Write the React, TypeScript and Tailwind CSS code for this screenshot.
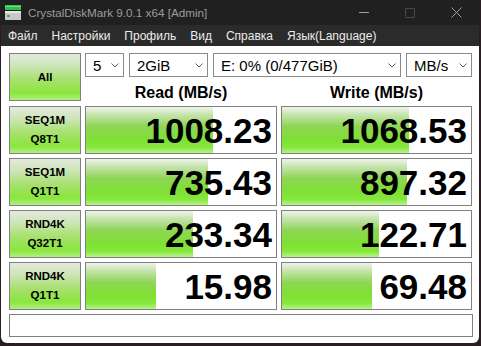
import React from "react";

// CrystalDiskMark main window, dark title/menu bar + green meters.

type Row = { l1: string; l2: string; read: number; write: number };

const rows: Row[] = [
  { l1: "SEQ1M", l2: "Q8T1", read: 1008.23, write: 1068.53 },
  { l1: "SEQ1M", l2: "Q1T1", read: 735.43, write: 897.32 },
  { l1: "RND4K", l2: "Q32T1", read: 233.34, write: 122.71 },
  { l1: "RND4K", l2: "Q1T1", read: 15.98, write: 69.48 },
];

const menu = ["Файл", "Настройки", "Профиль", "Вид", "Справка", "Язык(Language)"];

// meter is log scale: 0.1 MB/s .. 100000 MB/s over the full width
function meter(v: number) {
  const r = Math.log10(v * 10) / 6;
  return `${Math.max(0, Math.min(1, r)) * 100}%`;
}

const btnBg =
  "bg-[linear-gradient(180deg,#e3eadd_0%,#cde5b8_25%,#a8e070_55%,#8ae63c_85%,#b2ee84_100%)]";
const barBg =
  "bg-[linear-gradient(180deg,#f0f4ec_0%,#c8e4b0_16%,#8ed656_42%,#7fe034_70%,#86e83c_88%,#b8f28e_100%)]";

function Chevron() {
  return (
    <svg width="8" height="5" viewBox="0 0 8 5" className="shrink-0">
      <polyline points="0.5,0.5 4,4 7.5,0.5" fill="none" stroke="#606060" strokeWidth="1" />
    </svg>
  );
}

function Select({ w, label }: { w: string; label: string }) {
  return (
    <div
      className={`${w} h-[24px] border border-[#8a8a8a] bg-white flex items-center justify-between pl-[7px] pr-[4px] text-[15px] text-black`}
    >
      <span className="leading-none whitespace-nowrap">{label}</span>
      <Chevron />
    </div>
  );
}

function Label({ children }: { children: React.ReactNode }) {
  return (
    <div
      className={`w-[72px] h-[48px] border border-[#808080] ${btnBg} flex flex-col items-center justify-center text-[11.5px] font-bold leading-[19px] text-black`}
    >
      {children}
    </div>
  );
}

function Cell({ v, w }: { v: number; w: string }) {
  return (
    <div className={`${w} h-[48px] border border-[#808080] bg-white relative`}>
      <div className={`absolute left-0 top-0 bottom-0 ${barBg}`} style={{ width: meter(v) }} />
      <div className="relative h-full flex items-center justify-end pr-[4px] text-[35px] font-bold text-black leading-none">
        {v.toFixed(2)}
      </div>
    </div>
  );
}

function AppIcon() {
  return (
    <svg width="16" height="16" viewBox="0 0 16 16">
      <rect x="0" y="0" width="16" height="5" fill="#2fc04a" />
      <rect x="0" y="1" width="16" height="1" fill="#6fe07c" />
      <rect x="0" y="6" width="16" height="9" fill="#c8c8c8" />
      <rect x="0" y="6" width="16" height="2" fill="#e8e8e8" />
      <rect x="2" y="10" width="3" height="2" fill="#2fc04a" />
    </svg>
  );
}

export default function App() {
  return (
    <div className="w-[481px] h-[346px] bg-[#2a1c20] font-['Liberation_Sans',Arial,sans-serif] overflow-hidden">
      <div className="ml-[1px] w-[478px] h-[343px] rounded-b-[6px] overflow-hidden bg-white flex flex-col">
        {/* title bar */}
        <div className="h-[25px] bg-[#202020] flex items-center shrink-0">
          <div className="ml-[4px] mr-[7px] flex items-center">
            <AppIcon />
          </div>
          <span className="text-[11.7px] text-[#9c9c9c] whitespace-nowrap">CrystalDiskMark 9.0.1 x64 [Admin]</span>
          <div className="ml-auto flex items-center h-full">
            <div className="w-[46px] flex justify-center">
              <div className="w-[10px] h-[1px] bg-[#a0a0a0]" />
            </div>
            <div className="w-[46px] flex justify-center">
              <div className="w-[10px] h-[10px] border border-[#4a4a4a] rounded-[1px]" />
            </div>
            <div className="w-[46px] flex justify-center">
              <svg width="11" height="11" viewBox="0 0 11 11">
                <path d="M0.5 0.5 L10.5 10.5 M10.5 0.5 L0.5 10.5" stroke="#a0a0a0" strokeWidth="1" />
              </svg>
            </div>
          </div>
        </div>

        {/* menu bar */}
        <div className="h-[21px] bg-[#2b2b2b] flex items-center gap-[14px] pl-[7px] text-[12px] text-[#ececec] shrink-0">
          {menu.map((m) => (
            <span key={m} className="whitespace-nowrap">
              {m}
            </span>
          ))}
        </div>

        {/* body */}
        <div className="pt-[7px] pl-[8px] flex flex-col gap-[4px]">
          <div className="flex gap-[4px]">
            <Label>All</Label>
            <div className="w-[387px] flex flex-col">
              <div className="flex gap-[5px]">
                <Select w="w-[39px]" label="5" />
                <Select w="w-[79px]" label="2GiB" />
                <Select w="w-[188px]" label="E: 0% (0/477GiB)" />
                <Select w="w-[66px]" label="MB/s" />
              </div>
              <div className="flex gap-[4px] mt-[7px]">
                <div className="w-[192px] text-center text-[16px] font-bold leading-[18px] text-black">
                  Read (MB/s)
                </div>
                <div className="w-[191px] text-center text-[16px] font-bold leading-[18px] text-black">
                  Write (MB/s)
                </div>
              </div>
            </div>
          </div>

          {rows.map((r) => (
            <div key={r.l1 + r.l2} className="flex gap-[4px]">
              <Label>
                <span>{r.l1}</span>
                <span>{r.l2}</span>
              </Label>
              <Cell v={r.read} w="w-[192px]" />
              <Cell v={r.write} w="w-[191px]" />
            </div>
          ))}

          <div className="w-[464px] h-[23px] border border-[#808080] bg-white" />
        </div>
      </div>
    </div>
  );
}
